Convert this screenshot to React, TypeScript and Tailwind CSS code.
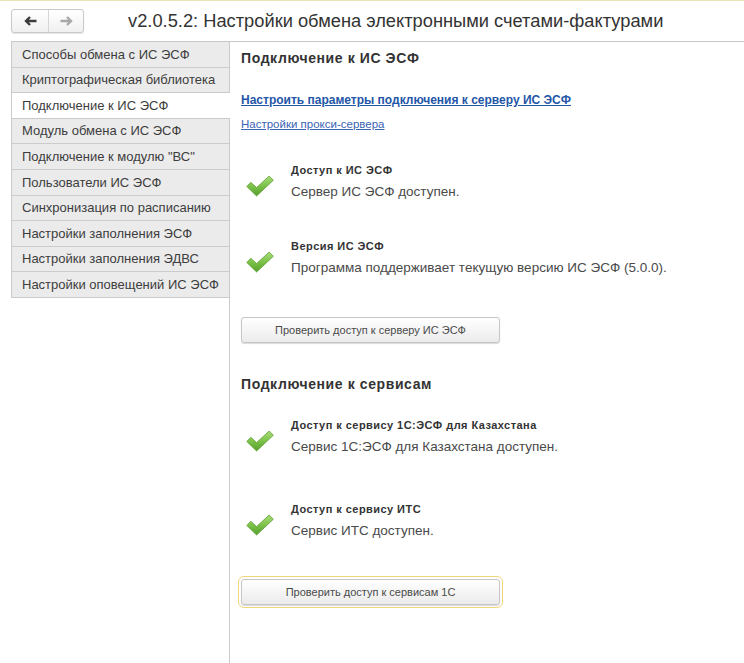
import React from 'react'

const sections = [
  'Способы обмена с ИС ЭСФ',
  'Криптографическая библиотека',
  'Подключение к ИС ЭСФ',
  'Модуль обмена с ИС ЭСФ',
  'Подключение к модулю "ВС"',
  'Пользователи ИС ЭСФ',
  'Синхронизация по расписанию',
  'Настройки заполнения ЭСФ',
  'Настройки заполнения ЭДВС',
  'Настройки оповещений ИС ЭСФ',
]

const activeSection = 'Подключение к ИС ЭСФ'

function CheckIcon() {
  return (
    <svg width="28" height="22" viewBox="0 0 28 22" className="shrink-0">
      <defs>
        <linearGradient id="chk" x1="0" y1="0" x2="0" y2="1">
          <stop offset="0" stopColor="#a9dd78" />
          <stop offset="0.5" stopColor="#7cc24a" />
          <stop offset="1" stopColor="#55a02c" />
        </linearGradient>
      </defs>
      <polygon
        points="0.8,11.5 4.8,7.3 10.6,12.6 23.2,1 27.3,5.3 10.6,21"
        fill="url(#chk)"
        stroke="#5e9e37"
        strokeWidth="0.8"
        strokeLinejoin="round"
      />
    </svg>
  )
}

function StatusItem({ title, text, className }: { title: string; text: string; className: string }) {
  return (
    <div className={`flex ${className}`}>
      <div className="w-[50px] shrink-0 pl-[5px] pt-[12px]">
        <CheckIcon />
      </div>
      <div>
        <div className="text-[11px] font-bold leading-[14px] tracking-[0.45px] text-[#333]">{title}</div>
        <div className="mt-[7px] text-[13.5px] leading-[16px] text-[#4a4a4a]">{text}</div>
      </div>
    </div>
  )
}

function ActionButton({ label, focused, className }: { label: string; focused?: boolean; className: string }) {
  return (
    <button
      type="button"
      className={`block h-[26px] w-[259px] rounded-[3px] border border-[#c6c6c6] bg-gradient-to-b from-white to-[#ebebeb] text-[11px] text-[#4a4a4a] shadow-[0_1px_1px_rgba(0,0,0,0.15)] ${
        focused ? 'outline outline-1 outline-offset-[2px] outline-[#f2d67a]' : ''
      } ${className}`}
    >
      {label}
    </button>
  )
}

export default function App() {
  return (
    <div className="h-[663px] w-[744px] overflow-hidden bg-white font-['Liberation_Sans',Arial,sans-serif]">
      <div className="flex h-[41px] items-center border-t border-[#e9e2b6]">
        <div className="ml-[11px] flex h-[24px] w-[73px] overflow-hidden rounded-[3px] border border-[#c9c9c9] bg-gradient-to-b from-white to-[#f0f0f0] shadow-[0_1px_1px_rgba(0,0,0,0.1)]">
          <div className="flex w-[37px] items-center justify-center border-r border-[#d6d6d6]">
            <svg width="13" height="10" viewBox="0 0 13 10">
              <path d="M12.5 5H3 M6 1L2 5l4 4" fill="none" stroke="#3c3c3c" strokeWidth="2.4" />
            </svg>
          </div>
          <div className="flex flex-1 items-center justify-center">
            <svg width="13" height="10" viewBox="0 0 13 10">
              <path d="M0.5 5H10 M7 1l4 4-4 4" fill="none" stroke="#a8a8a8" strokeWidth="2.4" />
            </svg>
          </div>
        </div>
        <h1 className="ml-[44px] text-[18.3px] leading-[22px] text-[#333]">
          v2.0.5.2: Настройки обмена электронными счетами-фактурами
        </h1>
      </div>

      <div className="ml-[11px] flex h-[622px] border-t border-[#c8c8c8]">
        <div className="w-[218px] shrink-0">
          {sections.map((name) => {
            const active = name === activeSection
            return (
              <div
                key={name}
                className={`flex h-[25.6px] items-center border-b border-l border-[#cbcbcb] pl-[10px] text-[13px] text-[#3d3d3d] ${
                  active ? 'relative z-10 -mr-px bg-white' : 'bg-[#ebebeb]'
                }`}
              >
                {name}
              </div>
            )
          })}
        </div>

        <div className="flex-1 border-l border-[#cbcbcb] px-[11px]">
          <h2 className="mt-[8px] text-[14px] font-bold leading-[16px] tracking-[0.6px] text-[#333]">
            Подключение к ИС ЭСФ
          </h2>
          <a href="#" className="mt-[27px] block text-[12px] font-bold leading-[14px] text-[#2456a8] underline">
            Настроить параметры подключения к серверу ИС ЭСФ
          </a>
          <a href="#" className="mt-[10px] block text-[11.5px] leading-[14px] text-[#3a64b4] underline">
            Настройки прокси-сервера
          </a>

          <StatusItem className="mt-[32px]" title="Доступ к ИС ЭСФ" text="Сервер ИС ЭСФ доступен." />
          <StatusItem
            className="mt-[39px]"
            title="Версия ИС ЭСФ"
            text="Программа поддерживает текущую версию ИС ЭСФ (5.0.0)."
          />

          <ActionButton className="mt-[41px]" label="Проверить доступ к серверу ИС ЭСФ" />

          <h2 className="mt-[33px] text-[14px] font-bold leading-[16px] tracking-[0.6px] text-[#333]">
            Подключение к сервисам
          </h2>

          <StatusItem
            className="mt-[26px]"
            title="Доступ к сервису 1С:ЭСФ для Казахстана"
            text="Сервис 1С:ЭСФ для Казахстана доступен."
          />
          <StatusItem className="mt-[47px]" title="Доступ к сервису ИТС" text="Сервис ИТС доступен." />

          <ActionButton className="mt-[40px]" label="Проверить доступ к сервисам 1С" focused />
        </div>
      </div>
    </div>
  )
}
